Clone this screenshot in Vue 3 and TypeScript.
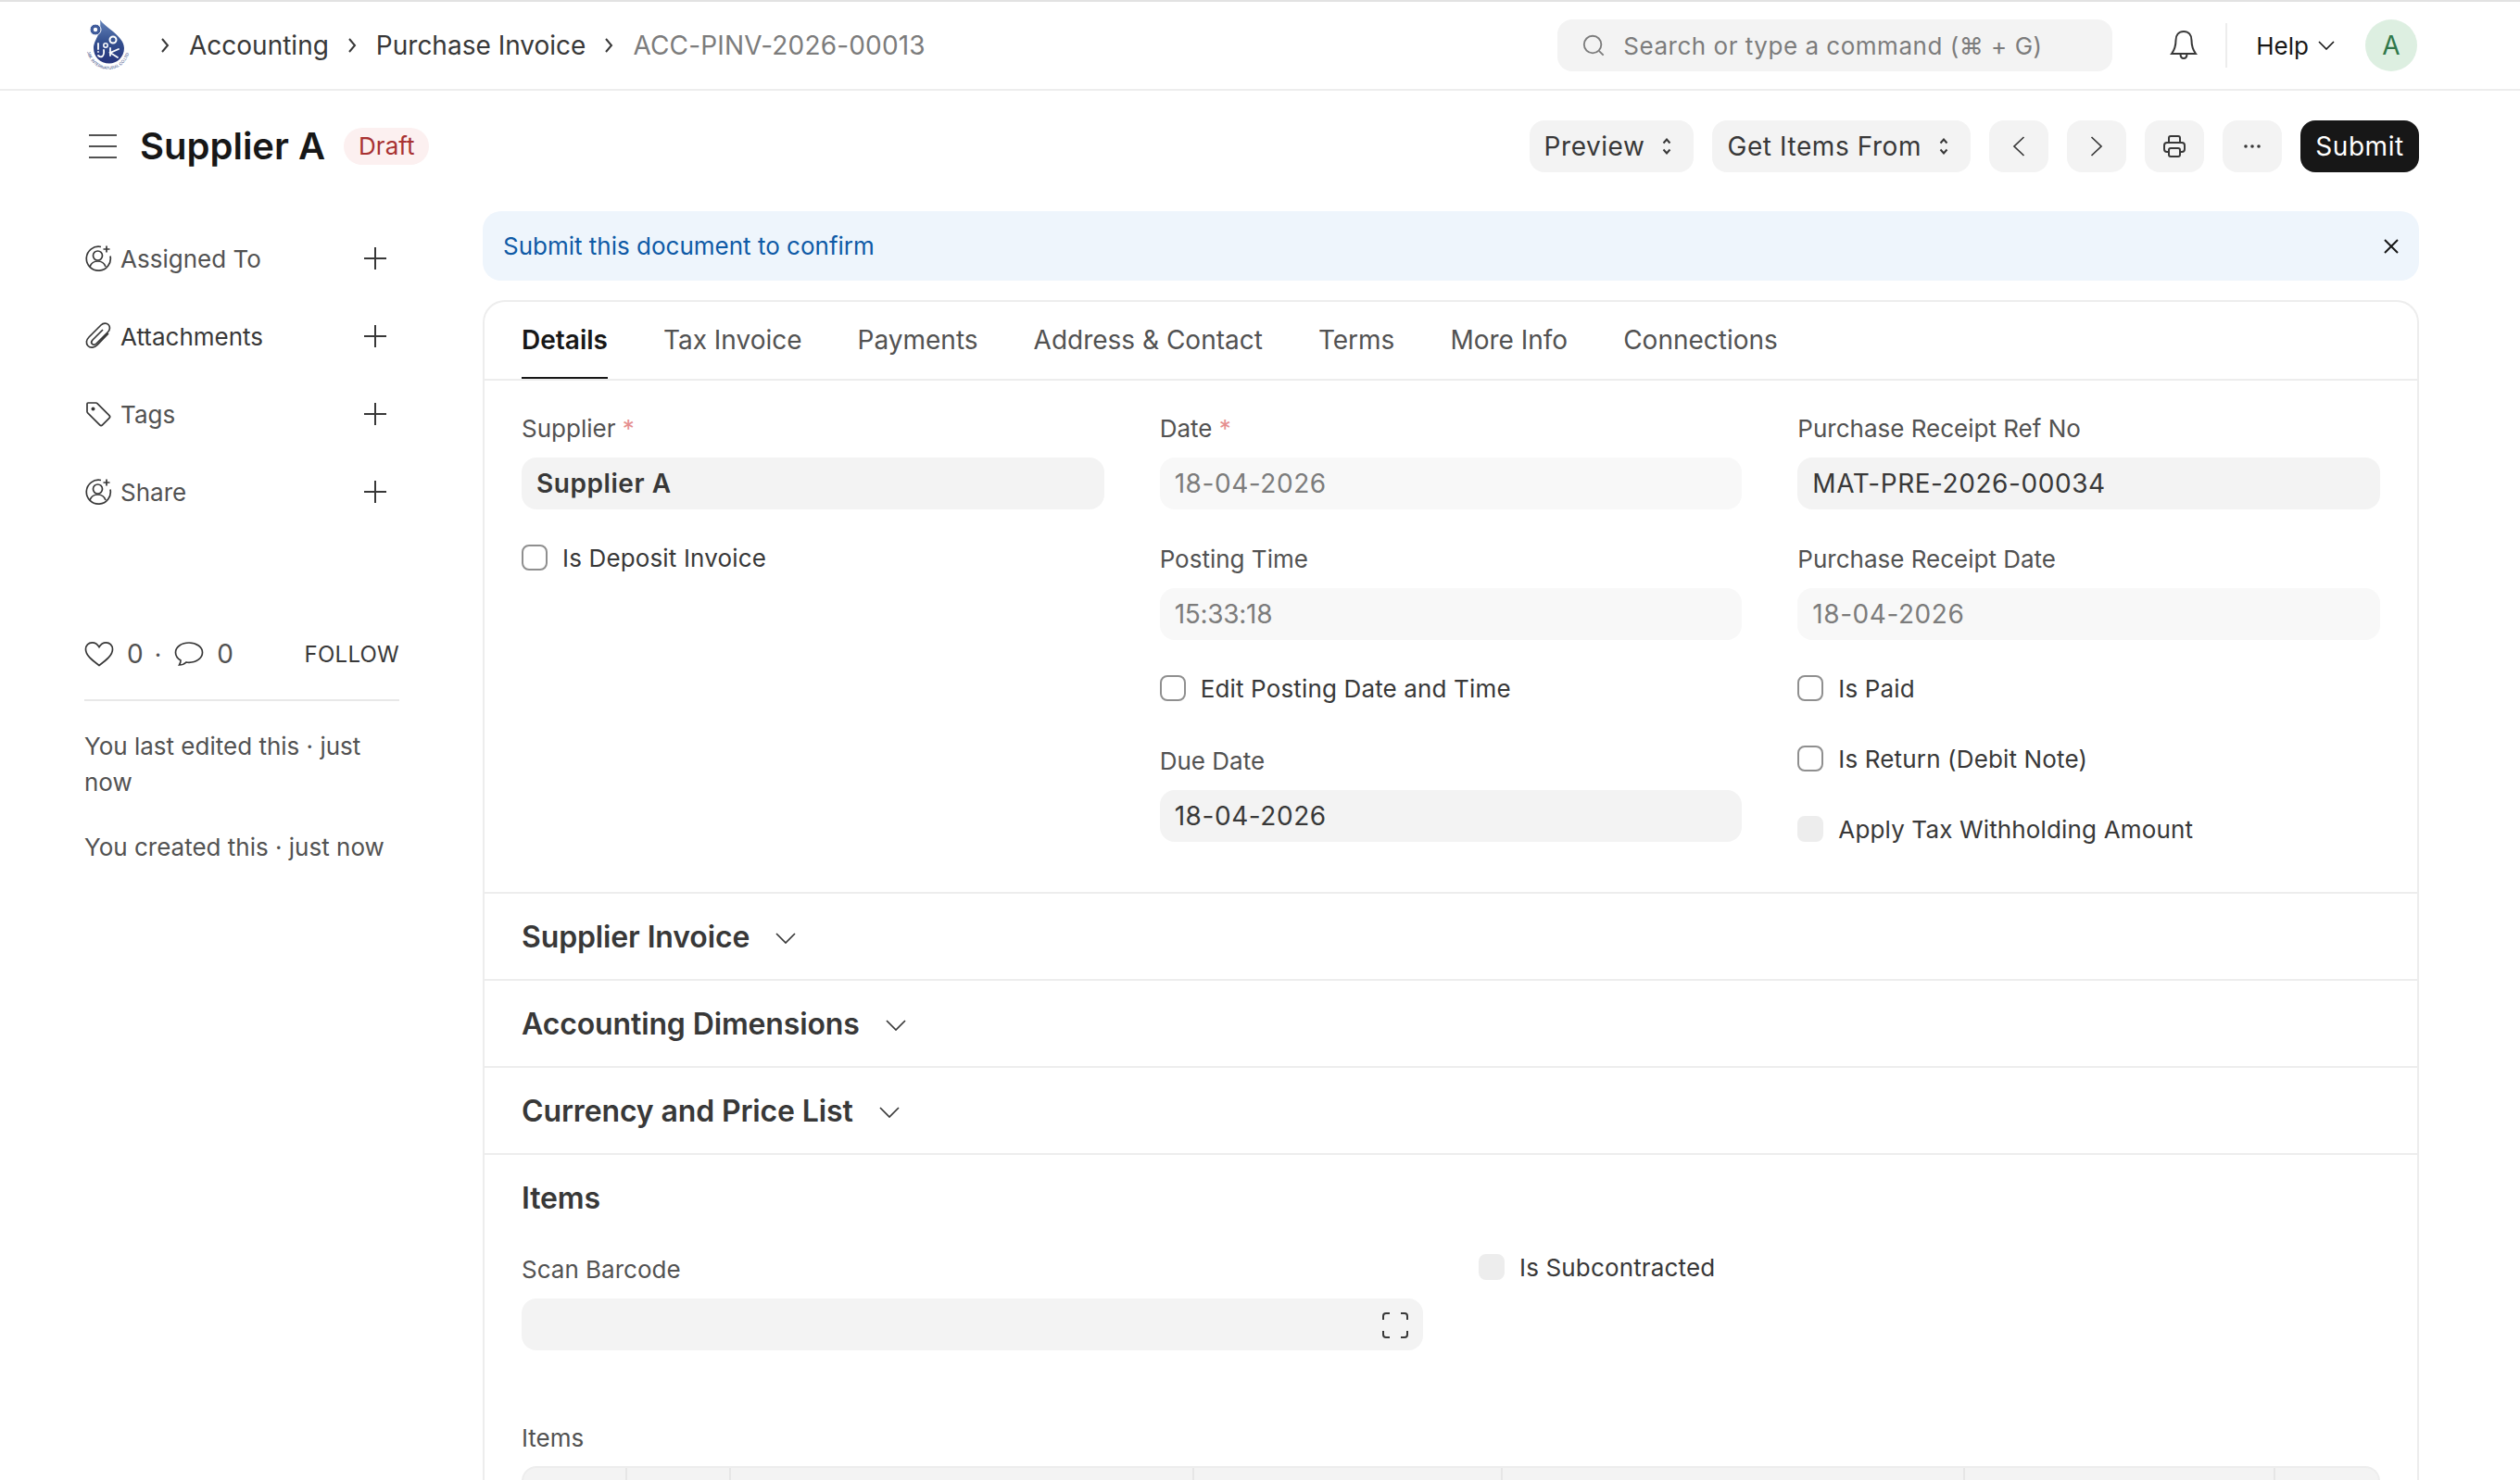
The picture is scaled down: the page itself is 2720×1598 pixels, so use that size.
<template>
  <div class="page">
    <header class="navbar">
      <svg class="logo" viewBox="0 0 48 58" width="48" height="58">
        <defs>
          <linearGradient id="dropFill" x1="0" y1="0" x2="0" y2="1">
            <stop offset="0" stop-color="#6483ba" />
            <stop offset="0.5" stop-color="#34508f" />
            <stop offset="1" stop-color="#27347c" />
          </linearGradient>
          <path id="logoArc" d="M1 36C5 50 15 55 24 55C33 55 43 50 47 35" />
        </defs>
        <path d="M15 1.500C21 10 41 19 41 32C41 42 33 48.500 25 48.500C15 48.500 8 41 8 32C8 23 17 17 15 1.500Z" fill="url(#dropFill)" />
        <circle cx="10" cy="12" r="6" fill="#3f5b9b" stroke="#fff" stroke-width="1" />
        <circle cx="10" cy="12" r="2.200" fill="#fff" />
        <circle cx="29" cy="23" r="3.500" fill="none" stroke="#fff" stroke-width="2" />
        <circle cx="21" cy="29" r="2.200" fill="none" stroke="#fff" stroke-width="1.500" />
        <g fill="none" stroke="#fff" stroke-width="1.800" stroke-linecap="round">
          <path d="M13 27v6" />
          <path d="M19 34c1 7-3 9-6 6" />
          <path d="M26 32v8" />
          <path d="M35 33l-9 4 8 5" />
          <path d="M13 36v.1" />
        </g>
        <text class="logo-text"><textPath href="#logoArc">J&amp;K INTERNATURAL CO.LTD</textPath></text>
      </svg>
      <nav class="crumbs">
        <template v-for="c in crumbs" :key="c">
          <svg class="crumb-sep" viewBox="0 0 10 16" width="10" height="16"><path d="M2 1l6 7-6 7" /></svg>
          <span class="crumb" :class="{ last: c === crumbs[crumbs.length - 1] }">{{ c }}</span>
        </template>
      </nav>
      <div class="search">
        <svg viewBox="0 0 28 28" width="28" height="28" class="search-icon"><circle cx="13" cy="13" r="10" /><path d="M20.500 20.500l5 5" /></svg>
        <span>Search or type a command (⌘ + G)</span>
      </div>
      <svg class="bell" viewBox="0 0 32 36" width="32" height="36">
        <path d="M16 3c-5.500 0-8.500 4.200-8.500 9.500 0 7-1.500 10.500-4.500 14.500h26c-3-4-4.500-7.500-4.500-14.500C24.500 7.200 21.500 3 16 3z" />
        <path d="M12.500 27c0 3 1.500 5 3.500 5s3.500-2 3.500-5" />
      </svg>
      <div class="nav-divider"></div>
      <div class="help">
        <span>Help</span>
        <svg viewBox="0 0 18 10" width="18" height="10"><path d="M1 1l8 8 8-8" /></svg>
      </div>
      <div class="avatar">A</div>
    </header>

    <div class="page-head">
      <svg class="burger" viewBox="0 0 30 28" width="30" height="28"><path d="M0 2h30M0 14h30M0 26h30" /></svg>
      <h1 class="title">Supplier A</h1>
      <span class="pill">Draft</span>
      <div class="actions">
        <button class="btn select-btn">
          <span>Preview</span>
          <svg viewBox="0 0 10 18" width="10" height="18"><path d="M1.500 5.500L5 1.500l3.500 4M1.500 12.500L5 16.500l3.500-4" /></svg>
        </button>
        <button class="btn select-btn">
          <span>Get Items From</span>
          <svg viewBox="0 0 10 18" width="10" height="18"><path d="M1.500 5.500L5 1.500l3.500 4M1.500 12.500L5 16.500l3.500-4" /></svg>
        </button>
        <button class="btn icon-btn">
          <svg class="thin" viewBox="0 0 14 22" width="14" height="22"><path d="M12.500 1L2 11l10.500 10" /></svg>
        </button>
        <button class="btn icon-btn">
          <svg class="thin" viewBox="0 0 14 22" width="14" height="22"><path d="M1.500 1L12 11 1.500 21" /></svg>
        </button>
        <button class="btn icon-btn">
          <svg viewBox="0 0 26 26" width="26" height="26">
            <path d="M7 9V4a2 2 0 0 1 2-2h8a2 2 0 0 1 2 2v5" />
            <path d="M7 19H5a3 3 0 0 1-3-3v-4a3 3 0 0 1 3-3h16a3 3 0 0 1 3 3v4a3 3 0 0 1-3 3h-2" />
            <rect x="7" y="15" width="12" height="9" rx="2" />
          </svg>
        </button>
        <button class="btn icon-btn">
          <svg viewBox="0 0 20 6" width="20" height="6"><circle cx="3" cy="3" r="1.800" class="dot" /><circle cx="10" cy="3" r="1.800" class="dot" /><circle cx="17" cy="3" r="1.800" class="dot" /></svg>
        </button>
        <button class="btn submit">Submit</button>
      </div>
    </div>

    <div class="main">
      <aside class="sidebar">
        <div v-for="row in sideRows" :key="row.label" class="side-row">
          <svg v-if="row.icon === 'user'" viewBox="0 0 30 30" width="30" height="30" class="side-icon">
            <path d="M18 2.500a13 13 0 1 0 10 10" />
            <path d="M24 1.500v7M20.500 5h7" />
            <circle cx="14.500" cy="12" r="5" />
            <path d="M6 24c1.500-4 5-6 8.500-6s7 2 8.500 6" />
          </svg>
          <svg v-else-if="row.icon === 'clip'" viewBox="0 0 30 30" width="30" height="30" class="side-icon">
            <path d="M26 12L14 24.500c-3 3-7.500 3.500-10 1s-2-6.500 1-9.500L18 3c2.500-2.500 6-2.500 8-.5s2 5.500-.5 8L13 23c-1.500 1.500-3.500 1.500-4.500.5s-1-3 .5-4.500l11-11" />
          </svg>
          <svg v-else viewBox="0 0 30 30" width="30" height="30" class="side-icon">
            <path d="M4 3h8.500a2 2 0 0 1 1.500.6l13 13a2 2 0 0 1 0 2.800l-7.500 7.500a2 2 0 0 1-2.800 0l-13-13A2 2 0 0 1 3 12.500V4a1 1 0 0 1 1-1z" />
            <circle cx="9.500" cy="9.500" r="2" class="dot" />
          </svg>
          <span class="side-label" :class="{ strong: row.label === 'Attachments' }">{{ row.label }}</span>
          <svg viewBox="0 0 24 24" width="24" height="24" class="plus"><path d="M12 0v24M0 12h24" /></svg>
        </div>

        <div class="social">
          <svg viewBox="0 0 32 28" width="32" height="28" class="side-icon">
            <path d="M16 26.500C8 20.500 1.500 15.500 1.500 9 1.500 5 4.500 1.800 8.500 1.800c3 0 5.800 1.800 7.500 4.700 1.700-2.900 4.500-4.700 7.500-4.700 4 0 7 3.200 7 7.200 0 6.500-6.500 11.500-14.500 17.500z" />
          </svg>
          <span class="count">0</span>
          <span class="mid-dot">·</span>
          <svg viewBox="0 0 32 28" width="32" height="28" class="side-icon">
            <path d="M16 2C8 2 1.500 6.500 1.500 12.500c0 3.500 2.200 6.500 5.500 8.500 0 1.500-.5 3.500-1.500 5 2.500 0 5.500-1 7.500-3 1 .2 2 .3 3 .3 8 0 14.500-4.800 14.500-10.800S24 2 16 2z" />
          </svg>
          <span class="count">0</span>
          <span class="follow">FOLLOW</span>
        </div>
        <div class="side-rule"></div>
        <p class="activity">You last edited this · just now</p>
        <p class="activity created">You created this · just now</p>
      </aside>

      <section class="content">
        <div class="alert">
          <span>Submit this document to confirm</span>
          <svg viewBox="0 0 16 16" width="16" height="16"><path d="M1 1l14 14M15 1L1 15" /></svg>
        </div>

        <div class="form-card">
          <div class="tabs">
            <div v-for="(tab, i) in tabs" :key="tab" class="tab" :class="{ active: i === 0 }">{{ tab }}</div>
          </div>

          <div class="details">
            <div class="col">
              <label class="field-label">Supplier <i>*</i></label>
              <div class="control bold">Supplier A</div>
              <label class="check first-check"><input type="checkbox" /><span>Is Deposit Invoice</span></label>
            </div>
            <div class="col">
              <label class="field-label">Date <i>*</i></label>
              <div class="control readonly">18-04-2026</div>
              <label class="field-label next">Posting Time</label>
              <div class="control readonly time">15:33:18</div>
              <label class="check first-check"><input type="checkbox" /><span>Edit Posting Date and Time</span></label>
              <label class="field-label due">Due Date</label>
              <div class="control">18-04-2026</div>
            </div>
            <div class="col">
              <label class="field-label">Purchase Receipt Ref No</label>
              <div class="control">MAT-PRE-2026-00034</div>
              <label class="field-label next">Purchase Receipt Date</label>
              <div class="control readonly">18-04-2026</div>
              <label class="check first-check"><input type="checkbox" /><span>Is Paid</span></label>
              <label class="check gap-check"><input type="checkbox" /><span>Is Return (Debit Note)</span></label>
              <label class="check gap-check"><input type="checkbox" disabled /><span>Apply Tax Withholding Amount</span></label>
            </div>
          </div>

          <div v-for="s in collapsed" :key="s" class="section-head">
            <span class="section-title">{{ s }}</span>
            <svg viewBox="0 0 22 12" width="22" height="12"><path d="M1 1l10 10L21 1" /></svg>
          </div>

          <div class="items">
            <div class="section-title">Items</div>
            <div class="items-row">
              <div>
                <label class="field-label">Scan Barcode</label>
                <div class="control scan">
                  <svg viewBox="0 0 28 28" width="28" height="28"><path d="M1 8V4a3 3 0 0 1 3-3h4M20 1h4a3 3 0 0 1 3 3v4M27 20v4a3 3 0 0 1-3 3h-4M8 27H4a3 3 0 0 1-3-3v-4" /></svg>
                </div>
              </div>
              <label class="check sub-check"><input type="checkbox" disabled /><span>Is Subcontracted</span></label>
            </div>
            <label class="field-label items-label">Items</label>
            <div class="grid-head">
              <div v-for="(w, i) in gridCols" :key="i" class="grid-cell" :style="{ width: w + 'px' }"></div>
            </div>
          </div>
        </div>
      </section>
    </div>
  </div>
</template>

<script setup lang="ts">
interface SideRow {
  label: string
  icon: 'user' | 'clip' | 'tag'
}

const crumbs: string[] = ['Accounting', 'Purchase Invoice', 'ACC-PINV-2026-00013']

const sideRows: SideRow[] = [
  { label: 'Assigned To', icon: 'user' },
  { label: 'Attachments', icon: 'clip' },
  { label: 'Tags', icon: 'tag' },
  { label: 'Share', icon: 'user' }
]

const tabs: string[] = ['Details', 'Tax Invoice', 'Payments', 'Address & Contact', 'Terms', 'More Info', 'Connections']

const collapsed: string[] = ['Supplier Invoice', 'Accounting Dimensions', 'Currency and Price List']

const gridCols: number[] = [112, 112, 500, 333, 499, 335, 110]
</script>

<style scoped>
.page {
  width: 2720px;
  height: 1598px;
  overflow: hidden;
  background: #fff;
  color: #383838;
  font-family: Inter, "Liberation Sans", sans-serif;
  font-size: 28px;
}

svg {
  fill: none;
  stroke: currentColor;
  stroke-width: 2;
  flex: none;
}

.thin {
  stroke-width: 1.700;
}

.dot {
  fill: currentColor;
  stroke: none;
}

.navbar {
  height: 98px;
  box-sizing: border-box;
  border-top: 2px solid #e2e2e2;
  border-bottom: 2px solid #ededed;
  display: flex;
  align-items: center;
  padding-left: 93px;
  padding-right: 111px;
}

.logo {
  stroke: none;
  fill: none;
  overflow: visible;
}

.logo-text {
  font-size: 4.600px;
  fill: #33467f;
  stroke: none;
  font-family: "Liberation Sans", sans-serif;
}

.crumbs {
  display: flex;
  align-items: center;
  margin-left: 31px;
}

.crumb-sep {
  color: #383838;
  margin-left: 1px;
  margin-right: 21px;
}

.crumb {
  margin-right: 19px;
}

.crumb.last {
  color: #7c7c7c;
  letter-spacing: 0.006em;
}

.search {
  margin-left: auto;
  width: 599px;
  height: 56px;
  box-sizing: border-box;
  border-radius: 16px;
  background: #f3f3f3;
  display: flex;
  align-items: center;
  gap: 19px;
  padding-left: 26px;
  color: #7c7c7c;
  font-size: 26px;
  letter-spacing: 0.02em;
}

.search-icon {
  width: 26px;
  height: 26px;
}

.bell {
  margin-left: 61px;
  color: #383838;
}

.nav-divider {
  width: 2px;
  height: 48px;
  background: #ededed;
  margin-left: 29px;
}

.help {
  display: flex;
  align-items: center;
  gap: 10px;
  margin-left: 31px;
  color: #171717;
  font-size: 26px;
}

.help svg {
  stroke-width: 1.600;
}

.avatar {
  width: 56px;
  height: 56px;
  border-radius: 50%;
  background: #ddefe1;
  color: #30784a;
  display: flex;
  align-items: center;
  justify-content: center;
  margin-left: 33px;
}

.page-head {
  height: 130px;
  box-sizing: border-box;
  padding: 32px 109px 0 96px;
  display: flex;
  align-items: flex-start;
}

.burger {
  margin-top: 14px;
  color: #525252;
}

.title {
  margin: 6px 0 0 25px;
  font-size: 40px;
  line-height: 44px;
  font-weight: 600;
  color: #171717;
}

.pill {
  margin: 8px 0 0 20px;
  height: 40px;
  padding: 0 16px;
  border-radius: 20px;
  background: #fcf0f0;
  color: #a83232;
  font-size: 26px;
  line-height: 40px;
}

.actions {
  margin-left: auto;
  display: flex;
  gap: 20px;
}

.btn {
  height: 56px;
  border: none;
  border-radius: 16px;
  background: #f3f3f3;
  color: #383838;
  font-family: inherit;
  font-size: 28px;
  letter-spacing: 0.02em;
  padding: 0;
  display: flex;
  align-items: center;
  justify-content: center;
}

.select-btn {
  padding: 0 24px 0 16px;
  gap: 19px;
}

.icon-btn {
  width: 64px;
}

.submit {
  width: 128px;
  background: #171717;
  color: #fff;
}

.main {
  display: flex;
  padding-left: 91px;
}

.sidebar {
  width: 340px;
  margin-right: 90px;
  padding-top: 9px;
  flex: none;
  color: #525252;
}

.side-row {
  height: 84px;
  display: flex;
  align-items: center;
  gap: 9px;
}

.side-icon {
  color: #383838;
  stroke-width: 1.700;
}

.side-label {
  font-size: 26px;
}

.side-label.strong {
  color: #383838;
}

.plus {
  margin-left: auto;
  margin-right: 14px;
  color: #383838;
}

.social {
  margin-top: 113px;
  height: 40px;
  display: flex;
  align-items: center;
  font-size: 26px;
}

.count {
  margin-left: 14px;
  font-size: 28px;
}

.mid-dot {
  margin: 0 14px 0 12px;
}

.follow {
  margin-left: auto;
  color: #383838;
  font-size: 24px;
  letter-spacing: 0.01em;
}

.side-rule {
  height: 2px;
  margin-top: 29px;
  background: #e8e8e8;
}

.activity {
  margin: 29px 0 0;
  font-size: 26px;
  line-height: 39px;
}

.activity.created {
  margin-top: 31px;
}

.content {
  width: 2090px;
  flex: none;
}

.alert {
  height: 75px;
  border-radius: 20px;
  background: #eef5fc;
  color: #0e5aa6;
  display: flex;
  align-items: center;
  justify-content: space-between;
  padding: 0 22px;
  font-size: 26px;
}

.alert svg {
  color: #171717;
}

.form-card {
  margin-top: 21px;
  border: 2px solid #ededed;
  border-bottom: none;
  border-radius: 24px 24px 0 0;
}

.tabs {
  display: flex;
  gap: 60px;
  height: 83px;
  padding: 0 40px;
  border-bottom: 2px solid #ededed;
}

.tab {
  line-height: 82px;
  height: 83px;
  box-sizing: border-box;
  color: #525252;
}

.tab.active {
  color: #171717;
  font-weight: 600;
  border-bottom: 2px solid #171717;
}

.details {
  display: grid;
  grid-template-columns: repeat(3, 1fr);
  column-gap: 60px;
  padding: 37px 40px 54px;
}

.field-label {
  display: block;
  height: 30px;
  line-height: 30px;
  margin-bottom: 16px;
  font-size: 26px;
  color: #525252;
}

.field-label i {
  font-style: normal;
  color: #e58f8f;
}

.field-label.next {
  margin-top: 39px;
}

.field-label.due {
  margin-top: 50px;
}

.control {
  height: 56px;
  box-sizing: border-box;
  border-radius: 16px;
  background: #f3f3f3;
  padding: 0 16px;
  line-height: 56px;
  letter-spacing: 0.02em;
  color: #383838;
}

.control.bold {
  font-weight: 600;
}

.control.readonly {
  background: #f8f8f8;
  color: #7c7c7c;
}

.control.time {
  letter-spacing: -0.01em;
}

.check {
  display: flex;
  align-items: center;
  gap: 16px;
  height: 28px;
  font-size: 26px;
  letter-spacing: 0.15px;
  color: #383838;
}

.check input {
  appearance: none;
  width: 28px;
  height: 28px;
  margin: 0;
  border: 2px solid #8f8f8f;
  border-radius: 8px;
  background: #fff;
  flex: none;
}

.check input:disabled {
  background: #ededed;
  border-color: #ededed;
}

.first-check {
  margin-top: 38px;
}

.gap-check {
  margin-top: 48px;
}

.section-head {
  height: 90px;
  border-top: 2px solid #ededed;
  padding: 2px 40px 0;
  display: flex;
  align-items: center;
  gap: 28px;
}

.section-head svg {
  margin-top: 2px;
  color: #383838;
  stroke-width: 1.700;
}

.section-title {
  font-size: 32px;
  font-weight: 600;
  color: #383838;
  line-height: 40px;
  letter-spacing: -0.004em;
}

.items {
  border-top: 2px solid #ededed;
  padding: 27px 40px 0;
}

.items-row {
  margin-top: 42px;
  display: grid;
  grid-template-columns: 1fr 1fr;
  column-gap: 60px;
  align-items: start;
}

.sub-check {
  margin-top: -2px;
}

.scan {
  display: flex;
  align-items: center;
  justify-content: flex-end;
  padding-right: 16px;
  color: #383838;
}

.scan svg {
  margin-top: 2px;
}

.items-label {
  margin-top: 80px;
  margin-bottom: 15px;
}

.grid-head {
  height: 60px;
  box-sizing: border-box;
  display: flex;
  background: #f3f3f3;
  border: 2px solid #ededed;
  border-bottom: none;
  border-radius: 16px 16px 0 0;
  overflow: hidden;
}

.grid-cell {
  box-sizing: border-box;
  border-right: 2px solid #e6e6e6;
}

.grid-cell:last-child {
  border-right: none;
}
</style>

<style>
body {
  margin: 0;
  overflow: hidden;
}
</style>
